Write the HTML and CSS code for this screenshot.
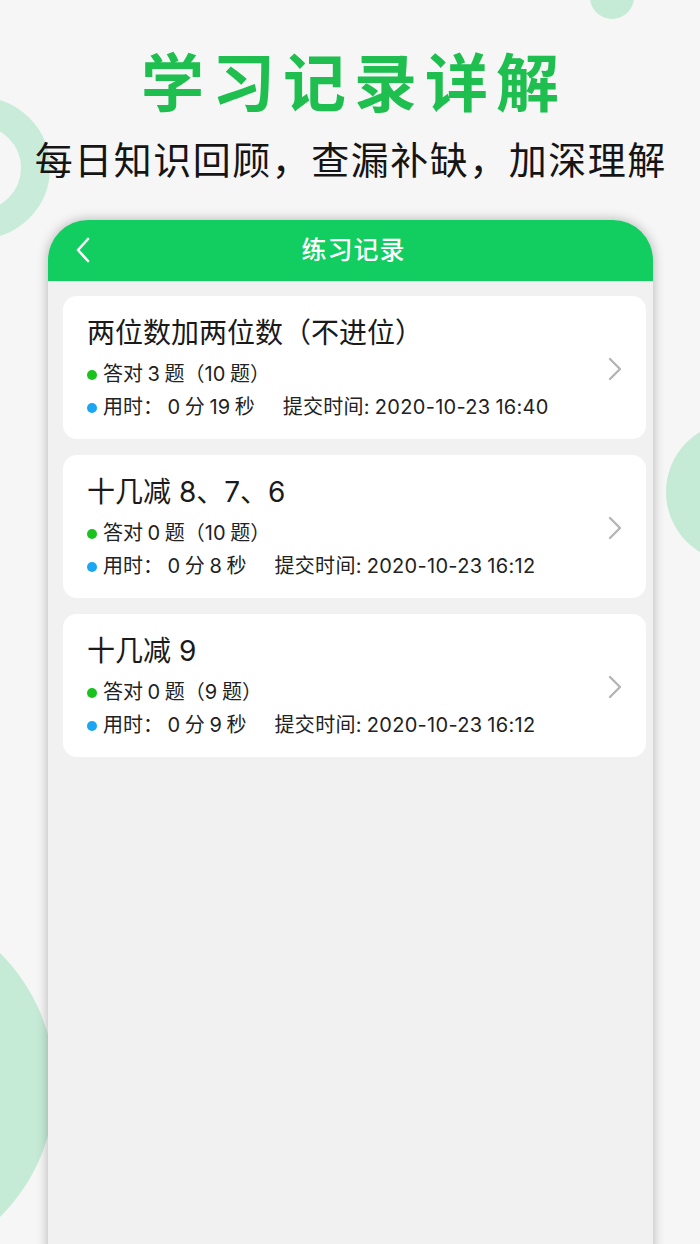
FILE: index.html
```html
<!DOCTYPE html>
<html lang="zh-CN">
<head>
    <meta charset="UTF-8">
    <meta name="viewport" content="width=device-width, initial-scale=1.0">
    <title>学习记录详解</title>
    <link rel="stylesheet" href="styles.css">
</head>
<body>
    <div class="blob blob-top"></div>
    <div class="blob blob-ring"></div>
    <div class="blob blob-right"></div>
    <div class="blob blob-bottom"></div>

    <h1 class="headline">学习记录详解</h1>
    <p class="subline">每日知识回顾，查漏补缺，加深理解</p>

    <div class="phone">
        <div class="bar">
            <svg class="back" width="16" height="26" viewBox="0 0 16 26">
                <path d="M13 2 L3 13 L13 24" fill="none" stroke="#fff" stroke-width="2.6" stroke-linecap="round" stroke-linejoin="round"/>
            </svg>
            <span class="bar-title">练习记录</span>
        </div>

        <div class="list">
            <div class="record">
                <div class="record-info">
                    <div class="record-name">两位数加两位数（不进位）</div>
                    <div class="record-line"><i class="dot green"></i>答对 3 题（10 题）</div>
                    <div class="record-line"><i class="dot blue"></i>用时： 0 分 19 秒<span class="submit">提交时间: 2020-10-23 16:40</span></div>
                </div>
                <svg class="arrow" width="16" height="24" viewBox="0 0 16 24">
                    <path d="M3 2 L13 12 L3 22" fill="none" stroke="#b5b5b5" stroke-width="2.4" stroke-linecap="round" stroke-linejoin="round"/>
                </svg>
            </div>

            <div class="record">
                <div class="record-info">
                    <div class="record-name">十几减 8、7、6</div>
                    <div class="record-line"><i class="dot green"></i>答对 0 题（10 题）</div>
                    <div class="record-line"><i class="dot blue"></i>用时： 0 分 8 秒<span class="submit">提交时间: 2020-10-23 16:12</span></div>
                </div>
                <svg class="arrow" width="16" height="24" viewBox="0 0 16 24">
                    <path d="M3 2 L13 12 L3 22" fill="none" stroke="#b5b5b5" stroke-width="2.4" stroke-linecap="round" stroke-linejoin="round"/>
                </svg>
            </div>

            <div class="record">
                <div class="record-info">
                    <div class="record-name">十几减 9</div>
                    <div class="record-line"><i class="dot green"></i>答对 0 题（9 题）</div>
                    <div class="record-line"><i class="dot blue"></i>用时： 0 分 9 秒<span class="submit">提交时间: 2020-10-23 16:12</span></div>
                </div>
                <svg class="arrow" width="16" height="24" viewBox="0 0 16 24">
                    <path d="M3 2 L13 12 L3 22" fill="none" stroke="#b5b5b5" stroke-width="2.4" stroke-linecap="round" stroke-linejoin="round"/>
                </svg>
            </div>
        </div>
    </div>
</body>
</html>
```

FILE: styles.css
```css
/* page */
html {
    overflow: hidden;
}

body {
    margin: 0;
    width: 700px;
    height: 1244px;
    overflow: hidden;
    position: relative;
    background: #f6f6f6;
    font-family: "Noto Sans CJK SC", "Noto Sans", sans-serif;
    color: #1a1a1a;
}

/* decorative circles */
.blob {
    position: absolute;
    border-radius: 50%;
    background: #c5ebd7;
}

.blob-top {
    left: 590px;
    top: -25px;
    width: 44px;
    height: 44px;
}

.blob-ring {
    left: -92px;
    top: 97px;
    width: 84px;
    height: 84px;
    background: none;
    border: 29px solid #c8ecd9;
}

.blob-right {
    left: 666px;
    top: 422px;
    width: 140px;
    height: 140px;
}

.blob-bottom {
    left: -317px;
    top: 899px;
    width: 372px;
    height: 372px;
}

/* headings */
.headline {
    position: relative;
    margin: 43px 0 0;
    text-align: center;
    font-size: 63px;
    line-height: 72px;
    font-weight: 700;
    letter-spacing: 8px;
    text-indent: 8px;
    color: #1ebf4f;
}

.subline {
    position: relative;
    margin: 18px 0 0;
    text-align: center;
    font-size: 38px;
    line-height: 50px;
    letter-spacing: 1.5px;
    text-indent: 1.5px;
    color: #151515;
}

/* phone frame */
.phone {
    position: relative;
    margin: 37px 0 0 48px;
    width: 605px;
    height: 1100px;
    background: #f1f1f1;
    border-radius: 40px 40px 0 0;
    box-shadow: 0 0 12px rgba(0, 0, 0, 0.28);
}

.bar {
    height: 61px;
    background: #12cd5f;
    border-radius: 40px 40px 0 0;
    display: flex;
    align-items: center;
    justify-content: center;
    position: relative;
}

.back {
    position: absolute;
    left: 27px;
    top: 17px;
}

.bar-title {
    color: #fff;
    font-size: 25px;
    font-weight: 500;
    letter-spacing: 1px;
    margin: 0 0 5px 6px;
}

/* records */
.list {
    padding: 15px 7px 0 15px;
    display: flex;
    flex-direction: column;
    gap: 16px;
}

.record {
    height: 143px;
    box-sizing: border-box;
    background: #fff;
    border-radius: 14px;
    padding: 20px 23px 0 24px;
    display: flex;
    align-items: flex-start;
}

.record-info {
    flex: 1;
}

.record-name {
    font-family: Inter, "Noto Sans CJK SC", sans-serif;
    font-size: 28px;
    line-height: 34px;
    margin-bottom: 8px;
    color: #1a1a1a;
}

.record-line {
    font-family: Inter, "Noto Sans CJK SC", sans-serif;
    font-size: 20px;
    line-height: 33px;
    word-spacing: -1px;
    color: #222;
    display: flex;
    align-items: center;
    white-space: pre;
}

.dot {
    width: 10px;
    height: 10px;
    border-radius: 50%;
    margin: 0 6px 0 0;
}

.green {
    background: #19c21d;
}

.blue {
    background: #1aa6f2;
}

.submit {
    margin-left: 28px;
    letter-spacing: 0.3px;
}

.arrow {
    margin-top: 41px;
}
```
